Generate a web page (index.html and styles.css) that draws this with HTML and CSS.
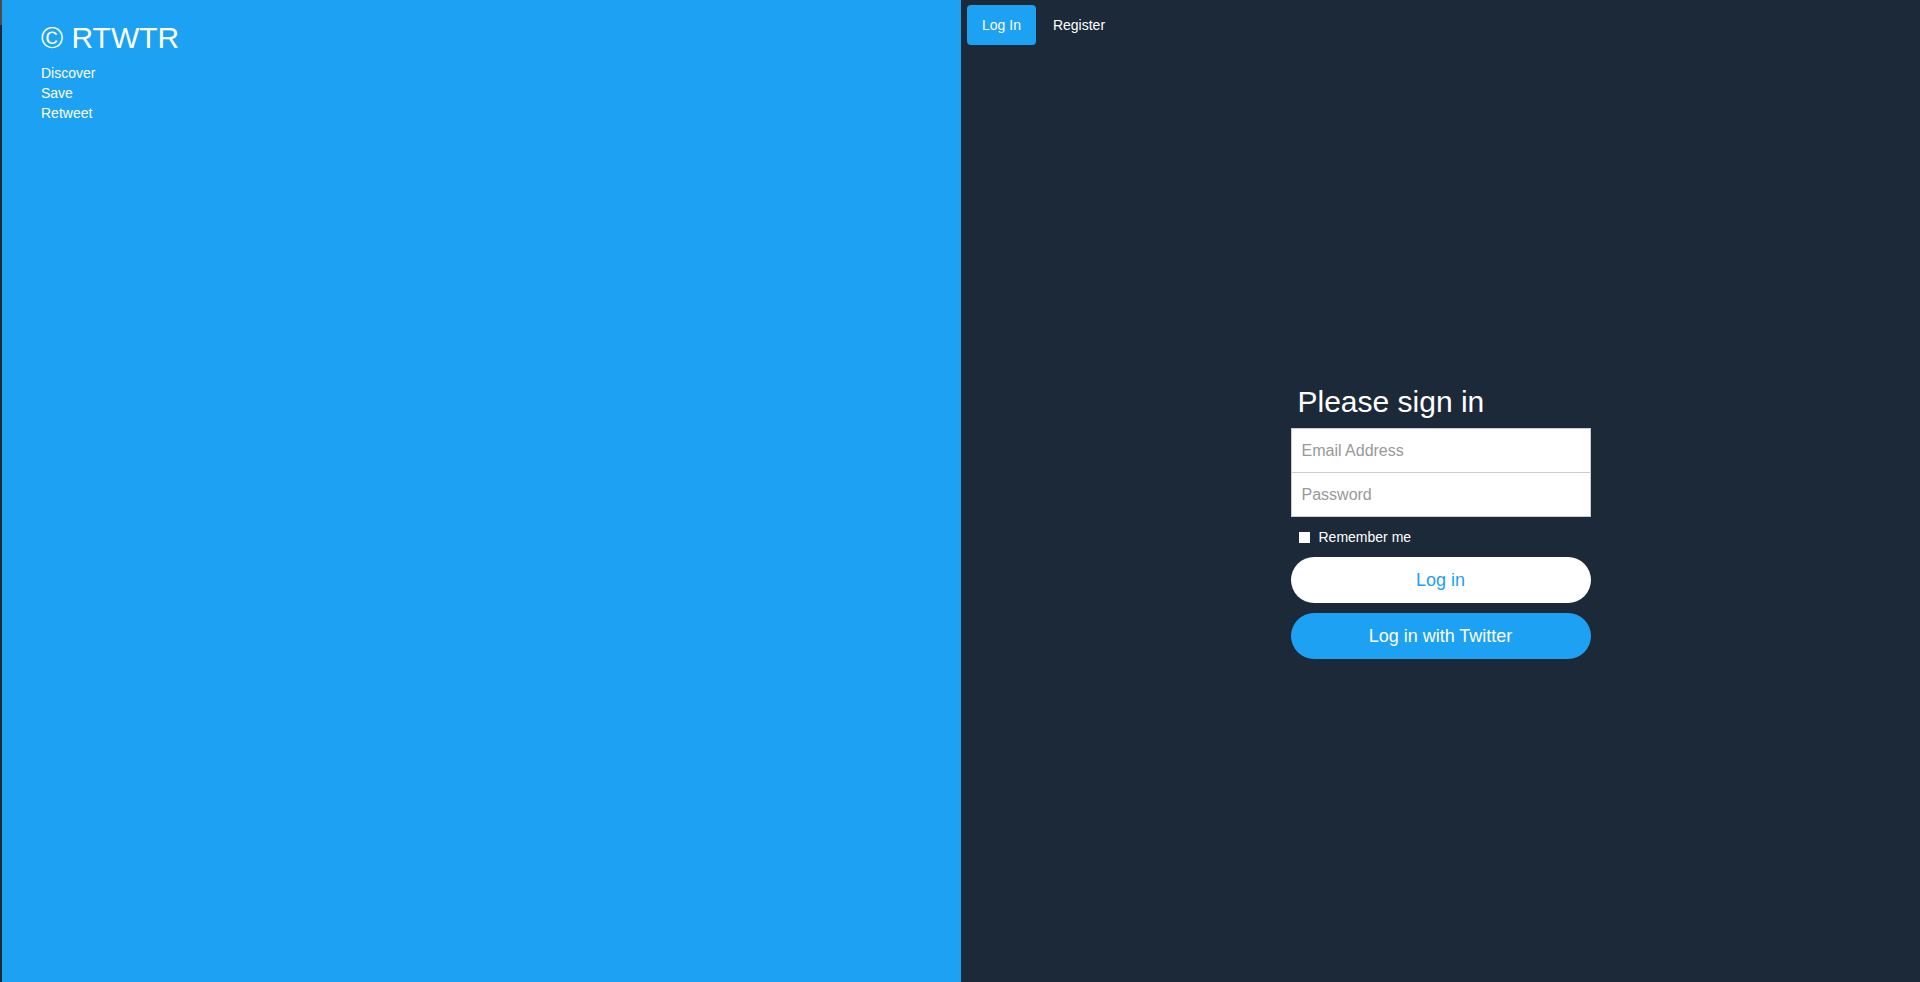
FILE: index.html
```html
<!DOCTYPE html>
<html lang="en">
<head>
<meta charset="utf-8">
<title>RTWTR</title>
<link rel="stylesheet" href="styles.css">
</head>
<body>
<div class="edge"></div>
<aside class="intro">
  <h1 class="brand">© RTWTR</h1>
  <ul class="features">
    <li>Discover</li>
    <li>Save</li>
    <li>Retweet</li>
  </ul>
</aside>
<main class="auth">
  <ul class="tabs">
    <li><a class="tab tab-active" href="#">Log In</a></li>
    <li><a class="tab" href="#">Register</a></li>
  </ul>
  <form class="signin">
    <h2 class="signin-heading">Please sign in</h2>
    <input class="field field-first" type="email" placeholder="Email Address">
    <input class="field field-last" type="password" placeholder="Password">
    <label class="remember"><input class="check" type="checkbox"><span>Remember me</span></label>
    <button class="btn btn-light" type="button">Log in</button>
    <button class="btn btn-blue" type="button">Log in with Twitter</button>
  </form>
</main>
</body>
</html>
```

FILE: styles.css
```css
* { box-sizing: border-box; }
html, body { height: 100%; }
body {
  margin: 0;
  display: flex;
  min-height: 982px;
  background: #1c2938;
  font-family: "Liberation Sans", Arial, sans-serif;
  font-size: 14px;
  line-height: 20px;
  color: #fff;
}
.edge {
  width: 2px;
  flex: none;
  background: linear-gradient(#4a4a4a 0 25px, #1c2938 25px);
}
.intro {
  width: 959px;
  flex: none;
  background: #1da1f2;
  padding: 0 39px;
}
.brand {
  margin: 21px 0 9px;
  font-size: 30px;
  line-height: 33px;
  font-weight: normal;
}
.features {
  list-style: none;
  margin: 0;
  padding: 0;
}
.auth {
  flex: 1;
  display: flex;
  flex-direction: column;
}
.tabs {
  list-style: none;
  margin: 5px 0 0 6px;
  padding: 0;
  display: flex;
  gap: 2px;
}
.tab {
  display: block;
  padding: 10px 15px;
  color: #fff;
  text-decoration: none;
  border-radius: 4px;
}
.tab-active { background: #1da1f2; }
.signin {
  width: 300px;
  margin: 340px auto 0;
  display: flex;
  flex-direction: column;
}
.signin-heading {
  margin: 0 0 10px;
  padding-left: 7px;
  font-size: 30px;
  line-height: 33px;
  font-weight: normal;
}
.field {
  display: block;
  width: 100%;
  height: 45px;
  padding: 10px;
  border: 1px solid #ccc;
  border-radius: 0;
  background: #fff;
  font-family: inherit;
  font-size: 16px;
  color: #555;
  outline: none;
}
.field::placeholder { color: #999; }
.field-last { margin-top: -1px; }
.remember {
  display: flex;
  align-items: center;
  gap: 9px;
  height: 20px;
  margin-top: 10px;
  padding-left: 8px;
}
.check {
  appearance: none;
  -webkit-appearance: none;
  width: 11px;
  height: 11px;
  margin: 0;
  background: #fff;
  border: none;
}
.btn {
  display: block;
  width: 100%;
  height: 46px;
  margin-top: 10px;
  border: none;
  border-radius: 23px;
  font-family: inherit;
  font-size: 18px;
  cursor: pointer;
}
.btn-light { background: #fff; color: #1da1f2; }
.btn-blue { background: #1da1f2; color: #fff; }
```
